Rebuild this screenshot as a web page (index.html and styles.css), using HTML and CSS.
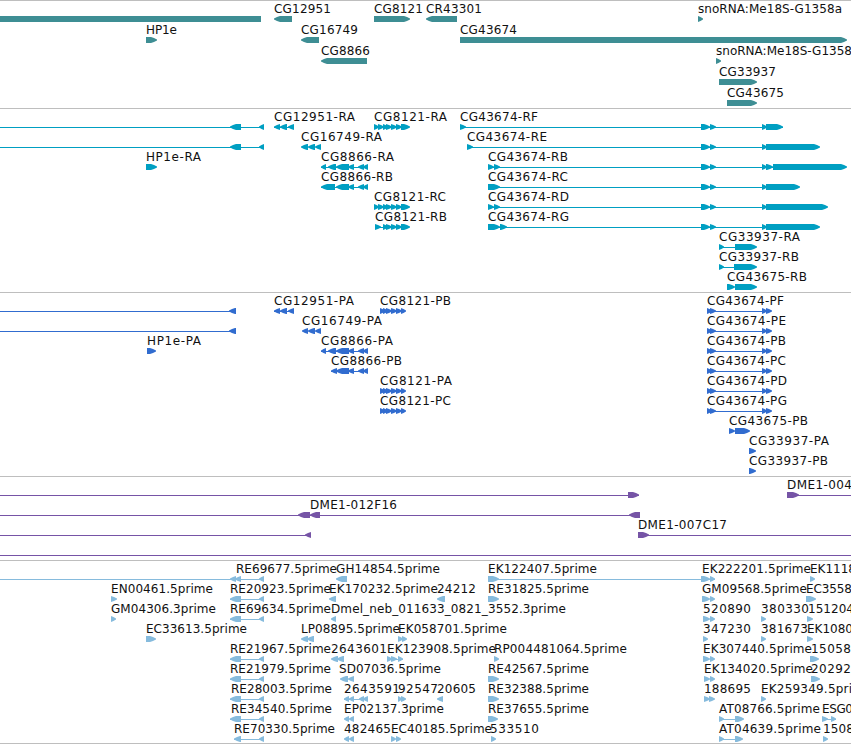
FILE: index.html
```html
<!DOCTYPE html>
<html lang="en">
<head>
    <meta charset="UTF-8">
    <meta name="viewport" content="width=device-width, initial-scale=1.0">
    <title>Genome Browser</title>
    <link rel="stylesheet" href="styles.css">
</head>
<body>
    <main class="browser" id="browser"></main>
    <script src="tracks.js"></script>
</body>
</html>
```

FILE: styles.css
```css
* {
    margin: 0;
    padding: 0;
    box-sizing: border-box;
}

body {
    background-color: #fff;
    overflow: hidden;
}

.browser {
    display: flex;
    flex-direction: column;
    width: 851px;
    height: 744px;
    overflow: hidden;
    border-bottom: 1px solid #bebebe;
}

.track {
    flex: none;
    border-top: 1px solid #bebebe;
    overflow: hidden;
}

.track svg {
    display: block;
}

.track text {
    font-family: "DejaVu Sans", sans-serif;
    font-size: 12px;
    fill: #111;
}

.gene {
    height: 108px;
    color: #3e8e94;
}

.transcript {
    height: 184px;
    color: #009fc2;
}

.protein {
    height: 184px;
    color: #316ccf;
}

.oligo {
    height: 84px;
    color: #7654a6;
}

.est {
    height: 183px;
    color: #86bbdd;
}

.feature,
.connector {
    fill: currentColor;
}

.connector {
    shape-rendering: crispEdges;
}
```

FILE: tracks.js
```js
// Row: [features, labels]
// feature: direction + start:end  (> forward, < reverse, = no strand, - connector)
// label: [x, text, right edge]
const cg12951 = '-274:294 <274:280 <280:287 <288:294';
const cg16749 = '<308:315 <315:321';
const cg8866 = '-321:368 <336:349 <348:354 <358:364 <363:368';
const cg8121 = '>383:388 >386:392 >391:397 >396:402';
const mid = '>701:710 >710:716 >762:767';
const pep = '-707:771 >707:712 >710:716 >762:767 >766:772';
const re = '-230:264 <230:241 <259:264';

const tracks = [
    { type: 'gene', pitch: 21, rows: [
        ['=0:261 <274:292 >374:410 <426:457 >698:703', [[274, 'CG12951', 331], [374, 'CG8121', 423], [426, 'CR43301', 482], [698, 'snoRNA:Me18S-G1358a', 842]]],
        ['>146:157 <301:319 >460:847', [[146, 'HP1e', 177], [301, 'CG16749', 358], [460, 'CG43674', 517]]],
        ['<321:367 >716:721', [[321, 'CG8866', 370], [716, 'snoRNA:Me18S-G1358', 852]]],
        ['>719:757', [[719, 'CG33937', 776]]],
        ['>727:757', [[727, 'CG43675', 784]]]
    ] },
    { type: 'transcript', pitch: 20, rows: [
        ['-0:264 <230:241 <259:264 ' + cg12951 + ' >374:379 >378:384 ' + cg8121 + ' >401:410 -460:783 >460:466 ' + mid + ' >766:783', [[274, 'CG12951-RA', 355], [374, 'CG8121-RA', 447], [460, 'CG43674-RF', 538]]],
        ['-0:264 <230:241 <259:264 <301:308 ' + cg16749 + ' -467:810 >467:473 ' + mid + ' >766:820', [[301, 'CG16749-RA', 382], [467, 'CG43674-RE', 547]]],
        ['>146:157 <321:326 <328:336 ' + cg8866 + ' -488:790 >488:494 >494:500 ' + mid + ' >766:773 >773:847', [[146, 'HP1e-RA', 201], [321, 'CG8866-RA', 394], [488, 'CG43674-RB', 568]]],
        ['<321:335 ' + cg8866 + ' -488:790 >488:500 ' + mid + ' >766:800', [[321, 'CG8866-RB', 393], [488, 'CG43674-RC', 568]]],
        ['>374:379 >378:384 ' + cg8121 + ' >401:410 -488:790 >488:494 >494:500 ' + mid + ' >766:828', [[374, 'CG8121-RC', 446], [488, 'CG43674-RD', 569]]],
        ['-375:402 >375:381 ' + cg8121 + ' >401:410 -488:790 >488:500 >500:507 ' + mid + ' >766:820', [[375, 'CG8121-RB', 447], [488, 'CG43674-RG', 569]]],
        ['-719:740 >719:724 >735:757', [[719, 'CG33937-RA', 800]]],
        ['-719:740 >719:724 >734:757', [[719, 'CG33937-RB', 799]]],
        ['>727:735 >735:757', [[727, 'CG43675-RB', 807]]]
    ] },
    { type: 'protein', pitch: 20, rows: [
        ['-0:236 <229:236 ' + cg12951 + ' >380:385 ' + cg8121 + ' >401:406 ' + pep, [[274, 'CG12951-PA', 354], [380, 'CG8121-PB', 451], [707, 'CG43674-PF', 784]]],
        ['-0:236 <229:236 <302:308 ' + cg16749 + ' ' + pep, [[302, 'CG16749-PA', 382], [707, 'CG43674-PE', 786]]],
        ['>147:156 <321:326 <328:336 ' + cg8866 + ' ' + pep, [[147, 'HP1e-PA', 201], [321, 'CG8866-PA', 393], [707, 'CG43674-PB', 786]]],
        ['<331:337 ' + cg8866.replace('-321', '-331') + ' ' + pep, [[331, 'CG8866-PB', 402], [707, 'CG43674-PC', 786]]],
        ['>380:385 ' + cg8121 + ' >401:406 ' + pep, [[380, 'CG8121-PA', 452], [707, 'CG43674-PD', 787]]],
        ['>380:385 ' + cg8121 + ' >401:406 ' + pep, [[380, 'CG8121-PC', 451], [707, 'CG43674-PG', 787]]],
        ['>729:735 >735:750', [[729, 'CG43675-PB', 808]]],
        ['>749:756', [[749, 'CG33937-PA', 829]]],
        ['>749:756', [[749, 'CG33937-PB', 828]]]
    ] },
    { type: 'oligo', pitch: 20, rows: [
        ['-0:639 >628:639 -787:851 >787:799', [[787, 'DME1-004', 852]]],
        ['-0:640 <298:310 <310:320 <629:640', [[310, 'DME1-012F16', 397]]],
        ['-0:311 <305:311 -638:851 >638:649', [[638, 'DME1-007C17', 727]]],
        ['-0:851', []]
    ] },
    { type: 'est', pitch: 20, rows: [
        ['-0:264 <230:236 <235:241 <259:264 <336:347 -488:715 >488:499 >701:710 >710:715 >810:815', [[236, 'RE69677.5prime', 337], [336, 'GH14854.5prime', 440], [488, 'EK122407.5prime', 597], [702, 'EK222201.5prime', 811], [810, 'EK1118', 856]]],
        ['>111:117 ' + re + ' <329:336 <437:445 >488:499 >702:710 >710:715 >806:816', [[111, 'EN00461.5prime', 213], [230, 'RE20923.5prime', 331], [329, 'EK170232.5prime', 438], [437, '24212', 476], [488, 'RE31825.5prime', 589], [702, 'GM09568.5prime', 807], [806, 'EC3558', 852]]],
        ['>111:116 ' + re + ' <331:336 >703:710 >710:715 >761:766 >807:813', [[111, 'GM04306.3prime', 216], [230, 'RE69634.5prime', 331], [331, 'Dmel_neb_011633_0821_3552.3prime', 566], [703, '520890', 751], [761, '380330', 809], [808, '151204', 854]]],
        ['>146:156 <301:308 <307:314 >398:403 >402:407 >703:708 >761:766 >807:813', [[146, 'EC33613.5prime', 247], [301, 'LP08895.5prime', 400], [398, 'EK058701.5prime', 507], [703, '347230', 751], [761, '381673', 808], [807, 'EK1080', 853]]],
        [re + ' <331:338 <337:344 -387:403 >387:392 >391:397 >398:403 >494:499 >703:710 >710:715 >810:819', [[230, 'RE21967.5prime', 331], [331, '2643601', 387], [387, 'EK123908.5prime', 496], [494, 'RP004481064.5prime', 627], [703, 'EK307440.5prime', 812], [811, '15058', 851]]],
        [re + ' <340:348 <348:354 >488:499 >704:710 >710:715 >811:820', [[230, 'RE21979.5prime', 331], [339, 'SD07036.5prime', 441], [488, 'RE42567.5prime', 589], [704, 'EK134020.5prime', 813], [811, '20292', 851]]],
        [re + ' -344:368 <344:349 <349:354 <359:364 <363:368 >398:402 >401:406 <437:443 >488:499 >704:710 >709:715 >761:766', [[231, 'RE28003.5prime', 332], [344, '2643591', 400], [398, '92547', 438], [437, '20605', 476], [488, 'RE32388.5prime', 589], [704, '188695', 751], [761, 'EK259349.5pri', 852]]],
        [re + ' <344:349 <349:354 >488:498 -719:740 >719:724 >735:744 -822:836 >822:828 >831:836', [[231, 'RE34540.5prime', 332], [344, 'EP02137.3prime', 444], [488, 'RE37655.5prime', 589], [719, 'AT08766.5prime', 820], [822, 'ESG0', 853]]],
        ['-234:264 <234:241 <259:264 <344:349 <349:354 >391:396 >396:401 >491:496 -719:740 >719:724 >735:743 >823:828', [[234, 'RE70330.5prime', 335], [344, '482465', 391], [391, 'EC40185.5prime', 492], [490, '533510', 539], [719, 'AT04639.5prime', 821], [823, '1508', 854]]]
    ] }
];

function drawFeature(spec, top) {
    const dir = spec[0];
    const [a, b] = spec.slice(1).split(':').map(Number);
    if (dir === '-') {
        return `<rect class="connector" x="${a}" y="${top + 18}" width="${b - a}" height="1"/>`;
    }
    const y = top + 15;
    if (dir === '=') {
        return `<rect class="feature" x="${a}" y="${y}" width="${b - a}" height="6"/>`;
    }
    const head = Math.min(6, b - a);
    const back = dir === '>' ? a : b;
    const tip = dir === '>' ? b : a;
    const step = dir === '>' ? -1 : 1;
    const neck = tip + step * head;
    const half = tip + step * head / 2;
    const points = [
        [back, y], [neck, y], [half, y + 1], [tip, y + 2.5],
        [tip, y + 3.5], [half, y + 5], [neck, y + 6], [back, y + 6]
    ];
    return `<polygon class="feature" points="${points.join(' ')}"/>`;
}

const browser = document.getElementById('browser');

tracks.forEach(track => {
    let shapes = '';
    track.rows.forEach(([features, labels], i) => {
        const top = i * track.pitch;
        shapes += features.split(' ').map(f => drawFeature(f, top)).join('');
        labels.forEach(([x, name, end]) => {
            shapes += `<text x="${x}" y="${top + 12}" textLength="${end - x}">${name}</text>`;
        });
    });
    const section = document.createElement('section');
    section.className = 'track ' + track.type;
    section.innerHTML = `<svg width="851" height="183">${shapes}</svg>`;
    browser.appendChild(section);
});
```
